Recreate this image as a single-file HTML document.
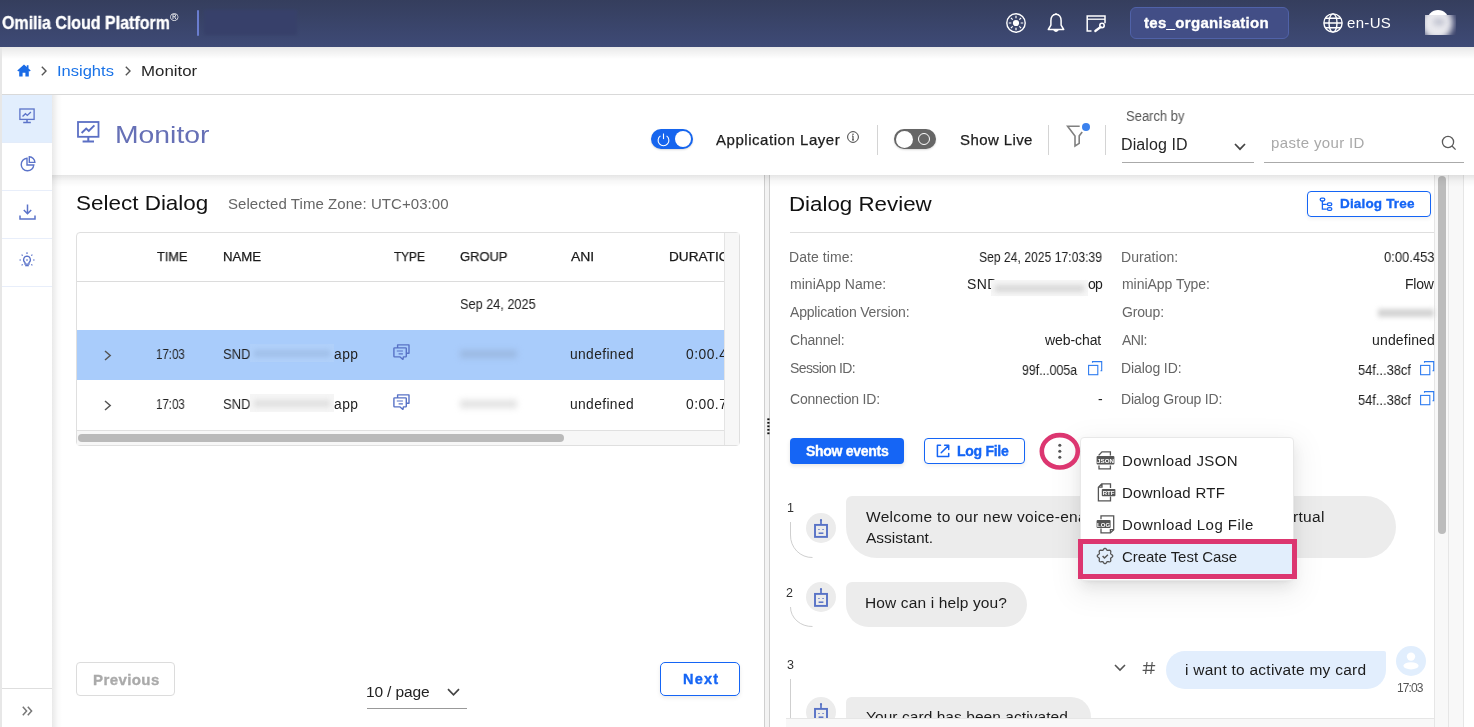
<!DOCTYPE html>
<html><head><meta charset="utf-8">
<style>
*{box-sizing:border-box;margin:0;padding:0}
html,body{width:1474px;height:727px;overflow:hidden;background:#fff}
body{position:relative;font-family:"Liberation Sans",sans-serif}
.a{position:absolute}
.t{position:absolute;white-space:nowrap;z-index:4;will-change:transform}
svg{position:absolute;overflow:visible}
.ov{z-index:5}
</style></head><body>
<!-- HEADER -->
<div class="a" style="left:0;top:0;width:1474px;height:47px;background:linear-gradient(#353e5d,#3e4a76);z-index:3"></div>
<div class="a" style="left:0;top:47px;width:1474px;height:12px;background:linear-gradient(rgba(0,0,0,.09),rgba(0,0,0,0));z-index:1"></div>
<div class="a" style="left:197px;top:10px;width:1.5px;height:26px;background:#6a7dcf;border-radius:1px;z-index:4"></div>
<div class="a" style="left:204px;top:10px;width:93px;height:25px;background:#37406a;filter:blur(1.5px);z-index:4"></div>
<div class="a" style="left:1130px;top:7px;width:159px;height:32px;background:#424e86;border:1px solid #5062a8;border-radius:6px;z-index:4"></div>
<div class="a" style="left:1427px;top:10.3px;width:22px;height:22px;background:#fff;border-radius:50%;z-index:4"></div>
<div class="a" style="left:1425px;top:15px;width:31px;height:20px;overflow:hidden;background:#39426b;z-index:4">
 <div class="a" style="left:-4px;top:-9px;width:32px;height:34px;background:#e9e9ee;border-radius:50%;filter:blur(3px)"></div>
 <div class="a" style="left:8px;top:3px;width:12px;height:8px;background:#c5c7d3;border-radius:50%;filter:blur(2.5px)"></div>
</div>
<!-- header icons -->
<svg style="left:1006px;top:13px;z-index:4" width="20" height="20" viewBox="0 0 20 20" fill="none" stroke="#fff">
 <circle cx="10" cy="10" r="9.2" stroke-width="1.4"/>
 <circle cx="10" cy="10" r="3.1" fill="#fff" stroke="none"/>
 <g stroke-width="1.3" stroke-linecap="butt">
 <path d="M14.70 10.00L17.20 10.00M13.32 13.32L15.09 15.09M10.00 14.70L10.00 17.20M6.68 13.32L4.91 15.09M5.30 10.00L2.80 10.00M6.68 6.68L4.91 4.91M10.00 5.30L10.00 2.80M13.32 6.68L15.09 4.91" stroke-width="1.2"/></g>
</svg>
<svg style="left:1047px;top:13px;z-index:4" width="18" height="20" viewBox="0 0 18 20" fill="none" stroke="#fff" stroke-width="1.5" stroke-linejoin="round">
 <path d="M9 1.3C5.6 1.3 3.9 4.2 3.9 7.5v4.6L1.3 16.5h15.4l-2.6-4.4V7.5C14.1 4.2 12.4 1.3 9 1.3z"/>
 <path d="M9 .2v1.2" stroke-width="1.6"/>
 <path d="M6.9 16.8Q9 19.6 11.1 16.8" fill="#fff"/>
</svg>
<svg style="left:1086px;top:15px;z-index:4" width="20" height="17" viewBox="0 0 20 17" fill="none" stroke="#fff" stroke-width="1.5">
 <path d="M5.5 16H1.2V1H19V8.2"/>
 <path d="M1.2 4.2H19" stroke-width="1.3"/>
 <circle cx="16" cy="10.5" r="2.2" stroke-width="1.6"/>
 <path d="M14.6 12L9.3 16" stroke-width="2.2" stroke-linecap="round"/>
</svg>
<svg style="left:1323px;top:13px;z-index:4" width="20" height="20" viewBox="0 0 20 20" fill="none" stroke="#fff" stroke-width="1.4">
 <circle cx="10" cy="10" r="9.1"/>
 <ellipse cx="10" cy="10" rx="4" ry="9.1"/>
 <path d="M1 10h18M2.3 5.3h15.4M2.3 14.7h15.4"/>
</svg>
<!-- BREADCRUMB -->
<div class="a" style="left:0;top:47px;width:2px;height:680px;background:#e7e7e7;z-index:6"></div>
<div class="a" style="left:2px;top:94px;width:1472px;height:1px;background:#d9d9d9"></div>
<svg style="left:17px;top:64px" width="14" height="13" viewBox="0 0 14 13">
 <path d="M7 .6L.3 6.4l1 1.1L2.2 6.8V12.6H5.6V8.8H8.4V12.6H11.8V6.8l.9.7 1-1.1L11.5 4.4V1.2H9.8V2.9z" fill="#1a6be6"/>
</svg>
<svg style="left:41px;top:66px" width="6" height="10" viewBox="0 0 6 10" fill="none" stroke="#555" stroke-width="1.4"><path d="M.8 .8L5 5 .8 9.2"/></svg>
<svg style="left:125px;top:66px" width="6" height="10" viewBox="0 0 6 10" fill="none" stroke="#555" stroke-width="1.4"><path d="M.8 .8L5 5 .8 9.2"/></svg>
<!-- SIDEBAR -->
<div class="a" style="left:2px;top:95px;width:50px;height:48px;background:#e2eefd"></div>
<div class="a" style="left:2px;top:142px;width:50px;height:1px;background:#e3ecfa"></div>
<div class="a" style="left:2px;top:190px;width:50px;height:1px;background:#e8eefa"></div>
<div class="a" style="left:2px;top:238px;width:50px;height:1px;background:#e8eefa"></div>
<div class="a" style="left:2px;top:286px;width:50px;height:1px;background:#e8eefa"></div>
<div class="a" style="left:2px;top:688px;width:50px;height:1px;background:#dedede"></div>
<div class="a" style="left:52px;top:95px;width:10px;height:632px;background:linear-gradient(90deg,rgba(0,0,0,.085),rgba(0,0,0,.02) 60%,rgba(0,0,0,0));z-index:3"></div>
<svg style="left:19px;top:108px" width="16" height="16" viewBox="0 0 16 16" fill="none" stroke="#5b73c9" stroke-width="1.3">
 <rect x=".9" y="1" width="14.2" height="10.4"/>
 <path d="M8 11.4v2.6M4.2 14.6h7.6" stroke-width="1.5"/>
 <path d="M3.5 8.6l3-2.8 1.8 1.6 3.6-3.4" stroke-width="1.4"/>
</svg>
<svg style="left:19.5px;top:155.5px" width="16" height="16" viewBox="0 0 16 16" fill="none" stroke="#5b73c9" stroke-width="1.4">
 <path d="M7 2.2A6.3 6.3 0 1 0 13.8 9H7z"/>
 <path d="M9.3 .8v5.6h5.6A5.8 5.8 0 0 0 9.3 .8z"/>
</svg>
<svg style="left:18.5px;top:204px" width="17" height="16" viewBox="0 0 17 16" fill="none" stroke="#5b73c9" stroke-width="1.5">
 <path d="M8.5 .5v9M4.8 6l3.7 3.7L12.2 6"/>
 <path d="M1 11.5v3.4h15v-3.4"/>
</svg>
<svg style="left:19px;top:252px" width="16" height="16" viewBox="0 0 16 16" fill="none" stroke="#5b73c9" stroke-width="1.3">
 <path d="M8 4.2a3.5 3.5 0 0 0-2 6.3v1.6h4v-1.6a3.5 3.5 0 0 0-2-6.3z"/>
 <path d="M6.2 13.6h3.6" stroke-width="1.4"/>
 <path d="M6.8 7.6h2.4L8 9.2z" fill="#5b73c9" stroke="none"/>
 <path d="M8 .3v1.6M.4 8h1.6M14 8h1.6M2.6 2.6l1.1 1.1M13.4 2.6l-1.1 1.1M2.6 13.4l1.1-1.1M13.4 13.4l-1.1-1.1" stroke-width="1.2"/>
</svg>
<svg style="left:21.5px;top:706px" width="11" height="10" viewBox="0 0 11 10" fill="none" stroke="#777" stroke-width="1.5"><path d="M.8 .8L4.6 5 .8 9.2M5.8 .8L9.6 5 5.8 9.2"/></svg>
<!-- MONITOR HEADER PANEL -->
<div class="a" style="left:52px;top:175px;width:1422px;height:12px;background:linear-gradient(rgba(0,0,0,.1),rgba(0,0,0,.03) 50%,rgba(0,0,0,0));z-index:1"></div>
<svg style="left:76.5px;top:120.5px" width="23" height="22" viewBox="0 0 23 22" fill="none" stroke="#5b6fc4" stroke-width="1.8">
 <rect x="1" y="1" width="20.5" height="14.8"/>
 <path d="M11.3 15.8v3.6M5.6 20.6h11.4" stroke-width="2"/>
 <path d="M4.6 12l4.6-4.4 2.6 2.4 5.6-5.6" stroke-width="1.9"/>
</svg>
<!-- toggle 1 -->
<div class="a" style="left:651px;top:129px;width:42px;height:20px;border-radius:10px;background:#1665ee;box-shadow:0 1px 2px rgba(0,0,0,.15)"></div>
<div class="a" style="left:675px;top:131px;width:16px;height:16px;border-radius:50%;background:#fff"></div>
<svg style="left:656.5px;top:133px" width="13" height="13" viewBox="0 0 13 13" fill="none" stroke="#fff" stroke-width="1.1"><path d="M3.4 2.9A5.4 5.4 0 1 0 9.6 2.9"/><path d="M6.5 .5v5.6"/></svg>
<svg style="left:847px;top:131px" width="12" height="12" viewBox="0 0 12 12" fill="none" stroke="#444" stroke-width="1"><circle cx="6" cy="6" r="5.4"/><path d="M6 5v4M5 9h2M5.1 5h1" stroke-width="1.1"/><circle cx="6" cy="3.2" r=".75" fill="#444" stroke="none"/></svg>
<div class="a" style="left:877px;top:125px;width:1px;height:30px;background:#d4d4d4"></div>
<!-- toggle 2 -->
<div class="a" style="left:894px;top:129px;width:42px;height:20px;border-radius:10px;background:#666;box-shadow:0 1px 2px rgba(0,0,0,.15)"></div>
<div class="a" style="left:895.5px;top:130.5px;width:17px;height:17px;border-radius:50%;background:#fff"></div>
<div class="a" style="left:918px;top:133px;width:12px;height:12px;border-radius:50%;border:1.2px solid #fff"></div>
<div class="a" style="left:1048px;top:125px;width:1px;height:30px;background:#d4d4d4"></div>
<svg style="left:1066px;top:124px" width="18" height="24" viewBox="0 0 18 24" fill="none" stroke="#808080" stroke-width="1.6" stroke-linejoin="miter">
 <path d="M16.2 8.1L13.2 11.9V19.3L9 22V12L1.6 2.2H13.7"/>
</svg>
<div class="a" style="left:1082px;top:123px;width:8px;height:8px;border-radius:50%;background:#3b82ee"></div>
<div class="a" style="left:1105px;top:125px;width:1px;height:30px;background:#d4d4d4"></div>
<svg style="left:1234px;top:143px" width="12" height="8" viewBox="0 0 12 8" fill="none" stroke="#444" stroke-width="1.7"><path d="M1 1l5 5.2L11 1"/></svg>
<div class="a" style="left:1122px;top:162px;width:132px;height:1px;background:#aaa"></div>
<div class="a" style="left:1264px;top:162px;width:200px;height:1px;background:#aaa"></div>
<svg style="left:1441px;top:135px" width="16" height="16" viewBox="0 0 16 16" fill="none" stroke="#5a5a5a" stroke-width="1.3"><circle cx="7" cy="7" r="5.6"/><path d="M11 11l3.6 3.6"/></svg>
<!-- RESIZER -->
<div class="a" style="left:764px;top:175px;width:6px;height:552px;background:#f3f3f3;border-left:1px solid #cfcfcf;border-right:1px solid #cfcfcf"></div>
<svg style="left:766.5px;top:418px;z-index:3" width="3" height="17" viewBox="0 0 3 17" fill="#111"><rect x=".3" y=".4" width="2.2" height="1.8"/><rect x=".3" y="3.9" width="2.2" height="1.8"/><rect x=".3" y="7.4" width="2.2" height="1.8"/><rect x=".3" y="10.9" width="2.2" height="1.8"/><rect x=".3" y="14.4" width="2.2" height="1.8"/></svg>
<!-- TABLE -->
<div class="a" style="left:76px;top:232px;width:664px;height:214px;border:1px solid #dfdfdf;border-radius:4px"></div>
<div class="a" style="left:77px;top:281px;width:647px;height:1px;background:#dcdcdc"></div>
<div class="a" style="left:77px;top:330px;width:647px;height:50px;background:#a9ccfb"></div>
<div class="a" style="left:77px;top:430px;width:647px;height:1px;background:#e0e0e0"></div>
<div class="a ov" style="left:724px;top:233px;width:15px;height:212px;background:#f7f7f7;border-left:1px solid #e4e4e4"></div>
<div class="a ov" style="left:77px;top:431px;width:647px;height:14px;background:#f7f7f7"></div>
<div class="a ov" style="left:78px;top:434px;width:486px;height:8px;background:#bababa;border-radius:4px"></div>
<!-- row chevrons -->
<svg style="left:104px;top:349.5px" width="8" height="11" viewBox="0 0 8 11" fill="none" stroke="#555" stroke-width="1.5"><path d="M1 1l5.2 4.5L1 10"/></svg>
<svg style="left:104px;top:399.5px" width="8" height="11" viewBox="0 0 8 11" fill="none" stroke="#555" stroke-width="1.5"><path d="M1 1l5.2 4.5L1 10"/></svg>
<!-- type icons -->
<svg style="left:392.5px;top:343.5px" width="17" height="17" viewBox="0 0 17 17" fill="none" stroke="#5872c6" stroke-width="1.4" stroke-linejoin="round"><path d="M4.6 3.9V.9h11.4v8.3h-2.7"/><path d="M1.6 3.9h11q.7 0 .7.7v7.6q0 .7-.7.7h-2.2l-.5 2.5-2.8-2.5H1.6q-.7 0-.7-.7v-7.6q0-.7.7-.7z"/><path d="M3.8 7h6.1M5.6 9.8h4.3" stroke-width="1.2"/></svg>
<svg style="left:392.5px;top:393.5px" width="17" height="17" viewBox="0 0 17 17" fill="none" stroke="#5872c6" stroke-width="1.4" stroke-linejoin="round"><path d="M4.6 3.9V.9h11.4v8.3h-2.7"/><path d="M1.6 3.9h11q.7 0 .7.7v7.6q0 .7-.7.7h-2.2l-.5 2.5-2.8-2.5H1.6q-.7 0-.7-.7v-7.6q0-.7.7-.7z"/><path d="M3.8 7h6.1M5.6 9.8h4.3" stroke-width="1.2"/></svg>
<!-- blurred names -->
<div class="a" style="left:250px;top:344px;width:84px;height:18px;background:#b0d0fa;z-index:5"></div>
<div class="a" style="left:254px;top:350px;width:76px;height:7px;background:#94b3dc;filter:blur(2.5px);opacity:.55;z-index:5"></div>
<div class="a" style="left:250px;top:394px;width:84px;height:18px;background:#f5f5f5;z-index:5"></div>
<div class="a" style="left:254px;top:400px;width:76px;height:7px;background:#d0d0d0;filter:blur(2.5px);opacity:.55;z-index:5"></div>
<div class="a" style="left:460px;top:350px;width:57px;height:8px;background:#8ea6c8;filter:blur(3px);opacity:.5;z-index:5"></div>
<div class="a" style="left:460px;top:400px;width:57px;height:8px;background:#c4c4c4;filter:blur(3px);opacity:.5;z-index:5"></div>
<!-- PAGINATION -->
<div class="a" style="left:76px;top:662px;width:99px;height:34px;border:1px solid #dcdcdc;border-radius:4px"></div>
<div class="a" style="left:660px;top:662px;width:80px;height:34px;border:1.5px solid #1565f5;border-radius:5px;box-shadow:0 2px 4px rgba(0,0,0,.08)"></div>
<div class="a" style="left:367px;top:708px;width:100px;height:1px;background:#999"></div>
<svg style="left:446.5px;top:688px" width="13" height="9" viewBox="0 0 13 9" fill="none" stroke="#444" stroke-width="1.7"><path d="M1 1.2l5.5 5.6L12 1.2"/></svg>

<!-- right scroll strips -->
<div class="a" style="left:1434px;top:175px;width:15px;height:552px;background:#f8f8f8;border-left:1px solid #e6e6e6;border-right:1px solid #e6e6e6"></div>
<div class="a" style="left:1438px;top:176px;width:8px;height:358px;background:#bcbcbc;border-radius:4px"></div>
<div class="a" style="left:1449px;top:175px;width:15px;height:552px;background:#f8f8f8;border-right:1px solid #e6e6e6"></div>
<div class="a ov" style="left:786px;top:718px;width:648px;height:9px;background:#f8f8f8;border-top:1px solid #e6e6e6"></div>
<div class="a" style="left:790px;top:232px;width:644px;height:1px;background:#dedede"></div>
<!-- dialog tree btn -->
<div class="a" style="left:1307px;top:191px;width:124px;height:26px;border:1.5px solid #1565f5;border-radius:4px;box-shadow:0 2px 4px rgba(0,0,0,.06)"></div>
<svg style="left:1319px;top:197px" width="14" height="14" viewBox="0 0 14 14" fill="none" stroke="#1565f5" stroke-width="1.3">
 <rect x="1.2" y="1.2" width="4.6" height="2.8" rx="1.4"/>
 <path d="M3.4 4v8.2h4.4M3.4 7.4h4.4"/>
 <rect x="8.4" y="5.8" width="4.4" height="2.8" rx="1.4"/>
 <rect x="8.4" y="10.6" width="4.4" height="2.8" rx="1.4"/>
</svg>
<!-- copy icons -->
<svg style="left:1088px;top:361px" width="15" height="15" viewBox="0 0 15 15" fill="none" stroke="#2e7cf0" stroke-width="1.1"><rect x=".6" y="4.4" width="9.2" height="9.3"/><path d="M4.5 1.8V.6h9.2v9.2h-1.2"/></svg>
<svg style="left:1420px;top:361px" width="15" height="15" viewBox="0 0 15 15" fill="none" stroke="#2e7cf0" stroke-width="1.1"><rect x=".6" y="4.4" width="9.2" height="9.3"/><path d="M4.5 1.8V.6h9.2v9.2h-1.2"/></svg>
<svg style="left:1420px;top:391px" width="15" height="15" viewBox="0 0 15 15" fill="none" stroke="#2e7cf0" stroke-width="1.1"><rect x=".6" y="4.4" width="9.2" height="9.3"/><path d="M4.5 1.8V.6h9.2v9.2h-1.2"/></svg>
<!-- blurred values -->
<div class="a" style="left:991px;top:280px;width:97px;height:16px;background:#f6f6f6;z-index:5"></div>
<div class="a" style="left:995px;top:285px;width:89px;height:7px;background:#d8d8d8;filter:blur(2.5px);z-index:5"></div>
<div class="a" style="left:1378px;top:309px;width:56px;height:8px;background:#d2d2d2;filter:blur(2.5px)"></div>
<!-- buttons -->
<div class="a" style="left:790px;top:438px;width:114px;height:26px;background:#1565f5;border-radius:4px;box-shadow:0 2px 4px rgba(0,0,0,.1)"></div>
<div class="a" style="left:924px;top:438px;width:101px;height:26px;border:1.5px solid #1565f5;border-radius:4px;box-shadow:0 2px 4px rgba(0,0,0,.06)"></div>
<svg style="left:936px;top:444px" width="14" height="14" viewBox="0 0 14 14" fill="none" stroke="#1565f5" stroke-width="1.5" stroke-linecap="round" stroke-linejoin="round"><path d="M4.5 1.2H1.4v11.4h11.3V9.4"/><path d="M5.2 8.8L12.4 1.6M8.6 1.3h4.1v4.1"/></svg>
<!-- kebab with pink circle -->
<svg style="left:1038px;top:430px;z-index:6" width="44" height="44" viewBox="0 0 44 44"><ellipse cx="21.8" cy="21.3" rx="18" ry="16.2" fill="none" stroke="#dc3670" stroke-width="4.6"/><circle cx="21.8" cy="15.2" r="1.55" fill="#555"/><circle cx="21.8" cy="21.2" r="1.55" fill="#555"/><circle cx="21.8" cy="27.2" r="1.55" fill="#555"/></svg>
<!-- CHAT -->
<div class="a" style="left:1080px;top:496px;width:0;height:0"></div>
<div class="a" style="left:846px;top:496px;width:550px;height:62px;background:#ececec;border-radius:6px 31px 31px 31px"></div>
<div class="a" style="left:846px;top:582px;width:181px;height:45px;background:#ececec;border-radius:6px 22.5px 22.5px 22.5px"></div>
<div class="a" style="left:846px;top:697px;width:245px;height:40px;background:#ececec;border-radius:6px 22px 22px 22px"></div>
<div class="a" style="left:1166px;top:651px;width:220px;height:38px;background:#e2eefd;border-radius:19px 2px 19px 19px"></div>
<!-- bot avatars -->
<svg style="left:806px;top:513px" width="30" height="30" viewBox="0 0 30 30"><circle cx="15" cy="15" r="15" fill="#ececec"/><g fill="none" stroke="#5872c6"><rect x="9" y="11.9" width="12" height="12" stroke-width="1.9"/><path d="M15 6.8v5" stroke-width="1.7"/><path d="M12.3 16.5h1.3M16.4 16.5h1.3" stroke-width="1.2"/><path d="M12.6 20.2h4.8" stroke-width="1.5"/></g><circle cx="15" cy="7.2" r="1.1" fill="#5872c6"/></svg>
<svg style="left:806px;top:582px" width="30" height="30" viewBox="0 0 30 30"><circle cx="15" cy="15" r="15" fill="#ececec"/><g fill="none" stroke="#5872c6"><rect x="9" y="11.9" width="12" height="12" stroke-width="1.9"/><path d="M15 6.8v5" stroke-width="1.7"/><path d="M12.3 16.5h1.3M16.4 16.5h1.3" stroke-width="1.2"/><path d="M12.6 20.2h4.8" stroke-width="1.5"/></g><circle cx="15" cy="7.2" r="1.1" fill="#5872c6"/></svg>
<svg style="left:806px;top:697px" width="30" height="30" viewBox="0 0 30 30"><circle cx="15" cy="15" r="15" fill="#ececec"/><g fill="none" stroke="#5872c6"><rect x="9" y="11.9" width="12" height="12" stroke-width="1.9"/><path d="M15 6.8v5" stroke-width="1.7"/><path d="M12.3 16.5h1.3M16.4 16.5h1.3" stroke-width="1.2"/><path d="M12.6 20.2h4.8" stroke-width="1.5"/></g><circle cx="15" cy="7.2" r="1.1" fill="#5872c6"/></svg>
<!-- thread curves -->
<svg style="left:789px;top:522px" width="26" height="37" viewBox="0 0 26 37" fill="none" stroke="#cfcfcf" stroke-width="1"><path d="M1.5 0v13A21.5 22 0 0 0 23.5 35.5"/></svg>
<svg style="left:789px;top:607px" width="26" height="22" viewBox="0 0 26 22" fill="none" stroke="#cfcfcf" stroke-width="1"><path d="M1.5 0A21.5 19.5 0 0 0 23.5 19.5"/></svg>
<div class="a" style="left:790px;top:679px;width:1px;height:40px;background:#cfcfcf"></div>
<!-- user avatar -->
<svg style="left:1396px;top:646px" width="30" height="30" viewBox="0 0 30 30"><circle cx="15" cy="15" r="15" fill="#e1eefd"/><circle cx="15" cy="10.6" r="4.2" fill="#fff"/><ellipse cx="15" cy="19.8" rx="7.6" ry="3.6" fill="#fff"/></svg>
<svg style="left:1114px;top:664px" width="12" height="8" viewBox="0 0 12 8" fill="none" stroke="#555" stroke-width="1.6"><path d="M1 1l5 5 5-5"/></svg>
<svg style="left:1142px;top:661px" width="14" height="14" viewBox="0 0 14 14" fill="none" stroke="#555" stroke-width="1.2"><path d="M5 1L3.6 13M10.2 1L8.8 13M1.2 4.6h12M.6 9.4h12"/></svg>
<!-- MENU -->
<div class="a ov" style="left:1079.5px;top:436.5px;width:214px;height:144.5px;background:#fff;border:1px solid #e8e8e8;border-radius:4px;box-shadow:0 3px 6px -4px rgba(0,0,0,.12),0 6px 16px 0 rgba(0,0,0,.08),0 9px 28px 8px rgba(0,0,0,.05)"></div>
<div class="a ov" style="left:1083px;top:544px;width:210px;height:30px;background:#e2eefc"></div>
<div class="a" style="left:1078px;top:539px;width:219px;height:40px;border:5px solid #dc3670;z-index:6"></div>
<svg class="ov" style="left:1095.5px;top:450.5px;z-index:6" width="19" height="19" viewBox="0 0 19 19" fill="none" stroke="#555" stroke-width="1.3"><path d="M3 4.5V4L6 .9h8.4v3.6M3 14.5v3.3h11.4v-3.3"/><rect x=".6" y="5" width="17.8" height="8.4" fill="#555" stroke="none" rx="1"/><text x="9.5" y="11.6" font-size="6.2" font-weight="bold" fill="#fff" stroke="none" text-anchor="middle" font-family="Liberation Sans">JSON</text></svg>
<svg class="ov" style="left:1096.5px;top:482.5px;z-index:6" width="19" height="19" viewBox="0 0 19 19" fill="none" stroke="#555" stroke-width="1.3"><path d="M5 .9h8.5v4M13.5 13.6v4.3H1.4V4.2L4.7 .9h.3v3.3H1.4M1.4 4.2V17.9"/><rect x="4.8" y="6" width="13.6" height="7.2" fill="#555" stroke="none" rx=".8"/><text x="11.6" y="11.8" font-size="6" font-weight="bold" fill="#fff" stroke="none" text-anchor="middle" font-family="Liberation Sans">RTF</text></svg>
<svg class="ov" style="left:1095.5px;top:514.5px;z-index:6" width="19" height="19" viewBox="0 0 19 19" fill="none" stroke="#555" stroke-width="1.3"><path d="M5 4.3V.9h12.7v13.8l-3.3 3.2H5v-4.5"/><path d="M17.7 14.7h-3.3v3.2" /><rect x=".6" y="5" width="14" height="8" fill="#555" stroke="none" rx="1"/><text x="7.6" y="11.6" font-size="6" font-weight="bold" fill="#fff" stroke="none" text-anchor="middle" font-family="Liberation Sans">LOG</text></svg>
<svg class="ov" style="left:1096px;top:547px;z-index:6" width="18" height="18" viewBox="0 0 18 18" fill="none" stroke="#555" stroke-width="1.3" stroke-linejoin="round"><path d="M9.00 1.30 L9.50 1.42 L9.95 1.76 L10.35 2.23 L10.68 2.72 L11.00 3.12 L11.33 3.36 L11.75 3.43 L12.25 3.37 L12.83 3.26 L13.44 3.21 L14.01 3.29 L14.44 3.56 L14.71 3.99 L14.79 4.56 L14.74 5.17 L14.63 5.75 L14.57 6.25 L14.64 6.67 L14.88 7.00 L15.28 7.32 L15.77 7.65 L16.24 8.05 L16.58 8.50 L16.70 9.00 L16.58 9.50 L16.24 9.95 L15.77 10.35 L15.28 10.68 L14.88 11.00 L14.64 11.33 L14.57 11.75 L14.63 12.25 L14.74 12.83 L14.79 13.44 L14.71 14.01 L14.44 14.44 L14.01 14.71 L13.44 14.79 L12.83 14.74 L12.25 14.63 L11.75 14.57 L11.33 14.64 L11.00 14.88 L10.68 15.28 L10.35 15.77 L9.95 16.24 L9.50 16.58 L9.00 16.70 L8.50 16.58 L8.05 16.24 L7.65 15.77 L7.32 15.28 L7.00 14.88 L6.67 14.64 L6.25 14.57 L5.75 14.63 L5.17 14.74 L4.56 14.79 L3.99 14.71 L3.56 14.44 L3.29 14.01 L3.21 13.44 L3.26 12.83 L3.37 12.25 L3.43 11.75 L3.36 11.33 L3.12 11.00 L2.72 10.68 L2.23 10.35 L1.76 9.95 L1.42 9.50 L1.30 9.00 L1.42 8.50 L1.76 8.05 L2.23 7.65 L2.72 7.32 L3.12 7.00 L3.36 6.67 L3.43 6.25 L3.37 5.75 L3.26 5.17 L3.21 4.56 L3.29 3.99 L3.56 3.56 L3.99 3.29 L4.56 3.21 L5.17 3.26 L5.75 3.37 L6.25 3.43 L6.67 3.36 L7.00 3.12 L7.32 2.72 L7.65 2.23 L8.05 1.76 L8.50 1.42z"/><path d="M6.6 9.1l1.9 2 3.4-3.3" stroke-width="1.4"/></svg>

<span class="t" style="left:2.00px;top:15.43px;font-size:17.8px;line-height:17.8px;font-weight:bold;color:#fff;letter-spacing:0.000px;transform:scaleX(0.8987);transform-origin:0 0;-webkit-text-stroke:0.35px #fff;">Omilia Cloud Platform</span>
<span class="t" style="left:169.85px;top:11.56px;font-size:11.5px;line-height:11.5px;font-weight:normal;color:#fff;letter-spacing:0.000px;">®</span>
<span class="t" style="left:1143.50px;top:15.20px;font-size:15px;line-height:15px;font-weight:bold;color:#fff;letter-spacing:0.313px;-webkit-text-stroke:0.35px #fff;">tes_organisation</span>
<span class="t" style="left:1346.53px;top:15.20px;font-size:15px;line-height:15px;font-weight:normal;color:#fff;letter-spacing:0.320px;">en-US</span>
<span class="t" style="left:57.11px;top:63.45px;font-size:15.3px;line-height:15.3px;font-weight:normal;color:#1a73e8;letter-spacing:0.000px;transform:scaleX(1.0792);transform-origin:0 0;">Insights</span>
<span class="t" style="left:141.18px;top:63.45px;font-size:15.3px;line-height:15.3px;font-weight:normal;color:#262626;letter-spacing:0.000px;transform:scaleX(1.1016);transform-origin:0 0;">Monitor</span>
<span class="t" style="left:115.39px;top:123.06px;font-size:24.5px;line-height:24.5px;font-weight:normal;color:#6670b6;letter-spacing:0.000px;transform:scaleX(1.1562);transform-origin:0 0;">Monitor</span>
<span class="t" style="left:716.40px;top:131.50px;font-size:15px;line-height:15px;font-weight:normal;color:#1c1c1c;letter-spacing:0.538px;-webkit-text-stroke:0.25px #1c1c1c;">Application Layer</span>
<span class="t" style="left:959.93px;top:131.50px;font-size:15px;line-height:15px;font-weight:normal;color:#1c1c1c;letter-spacing:0.396px;-webkit-text-stroke:0.25px #1c1c1c;">Show Live</span>
<span class="t" style="left:1125.59px;top:109.82px;font-size:13.8px;line-height:13.8px;font-weight:normal;color:#555;letter-spacing:0.000px;transform:scaleX(0.9400);transform-origin:0 0;">Search by</span>
<span class="t" style="left:1121.05px;top:137.05px;font-size:16px;line-height:16px;font-weight:normal;color:#262626;letter-spacing:0.088px;">Dialog ID</span>
<span class="t" style="left:1271.06px;top:135.30px;font-size:15px;line-height:15px;font-weight:normal;color:#a9a9a9;letter-spacing:0.354px;">paste your ID</span>
<span class="t" style="left:75.80px;top:194.04px;font-size:19.8px;line-height:19.8px;font-weight:normal;color:#111;letter-spacing:0.000px;transform:scaleX(1.1354);transform-origin:0 0;">Select Dialog</span>
<span class="t" style="left:227.53px;top:196.30px;font-size:15px;line-height:15px;font-weight:normal;color:#666;letter-spacing:0.061px;">Selected Time Zone: UTC+03:00</span>
<span class="t" style="left:156.80px;top:250.22px;font-size:13.2px;line-height:13.2px;font-weight:normal;color:#1a1a1a;letter-spacing:0.000px;transform:scaleX(0.9652);transform-origin:0 0;-webkit-text-stroke:0.25px #1a1a1a;">TIME</span>
<span class="t" style="left:222.57px;top:250.22px;font-size:13.2px;line-height:13.2px;font-weight:normal;color:#1a1a1a;letter-spacing:0.000px;transform:scaleX(0.9959);transform-origin:0 0;-webkit-text-stroke:0.25px #1a1a1a;">NAME</span>
<span class="t" style="left:393.62px;top:250.22px;font-size:13.2px;line-height:13.2px;font-weight:normal;color:#1a1a1a;letter-spacing:0.000px;transform:scaleX(0.8957);transform-origin:0 0;-webkit-text-stroke:0.25px #1a1a1a;">TYPE</span>
<span class="t" style="left:459.99px;top:250.22px;font-size:13.2px;line-height:13.2px;font-weight:normal;color:#1a1a1a;letter-spacing:0.000px;transform:scaleX(0.9824);transform-origin:0 0;-webkit-text-stroke:0.25px #1a1a1a;">GROUP</span>
<span class="t" style="left:571.00px;top:250.22px;font-size:13.2px;line-height:13.2px;font-weight:normal;color:#1a1a1a;letter-spacing:0.000px;transform:scaleX(1.0571);transform-origin:0 0;-webkit-text-stroke:0.25px #1a1a1a;">ANI</span>
<span class="t" style="left:668.94px;top:250.22px;font-size:13.2px;line-height:13.2px;font-weight:normal;color:#1a1a1a;letter-spacing:0.000px;transform:scaleX(1.0327);transform-origin:0 0;-webkit-text-stroke:0.25px #1a1a1a;width:64px;overflow:hidden;">DURATION</span>
<span class="t" style="left:460.20px;top:298.32px;font-size:13.8px;line-height:13.8px;font-weight:normal;color:#222;letter-spacing:0.000px;transform:scaleX(0.9209);transform-origin:0 0;">Sep 24, 2025</span>
<span class="t" style="left:156.28px;top:347.92px;font-size:13.8px;line-height:13.8px;font-weight:normal;color:#222;letter-spacing:0.000px;transform:scaleX(0.8335);transform-origin:0 0;">17:03</span>
<span class="t" style="left:223.10px;top:348.32px;font-size:13.8px;line-height:13.8px;font-weight:normal;color:#222;letter-spacing:0.000px;transform:scaleX(0.9388);transform-origin:0 0;">SND</span>
<span class="t" style="left:333.57px;top:348.32px;font-size:13.8px;line-height:13.8px;font-weight:normal;color:#222;letter-spacing:0.483px;">app</span>
<span class="t" style="left:570.14px;top:348.32px;font-size:13.8px;line-height:13.8px;font-weight:normal;color:#222;letter-spacing:0.377px;">undefined</span>
<span class="t" style="left:156.28px;top:397.92px;font-size:13.8px;line-height:13.8px;font-weight:normal;color:#222;letter-spacing:0.000px;transform:scaleX(0.8335);transform-origin:0 0;">17:03</span>
<span class="t" style="left:223.10px;top:398.32px;font-size:13.8px;line-height:13.8px;font-weight:normal;color:#222;letter-spacing:0.000px;transform:scaleX(0.9388);transform-origin:0 0;">SND</span>
<span class="t" style="left:333.57px;top:398.32px;font-size:13.8px;line-height:13.8px;font-weight:normal;color:#222;letter-spacing:0.483px;">app</span>
<span class="t" style="left:570.14px;top:398.32px;font-size:13.8px;line-height:13.8px;font-weight:normal;color:#222;letter-spacing:0.377px;">undefined</span>
<span class="t" style="left:686.07px;top:348.32px;font-size:13.8px;line-height:13.8px;font-weight:normal;color:#222;letter-spacing:0.500px;width:38px;overflow:hidden;">0:00.453</span>
<span class="t" style="left:686.07px;top:398.32px;font-size:13.8px;line-height:13.8px;font-weight:normal;color:#222;letter-spacing:0.500px;width:38px;overflow:hidden;">0:00.782</span>
<span class="t" style="left:92.66px;top:672.10px;font-size:15px;line-height:15px;font-weight:bold;color:#aaa;letter-spacing:0.412px;-webkit-text-stroke:0.35px #aaa;">Previous</span>
<span class="t" style="left:366.13px;top:684.48px;font-size:15.5px;line-height:15.5px;font-weight:normal;color:#222;letter-spacing:-0.143px;">10 / page</span>
<span class="t" style="left:682.69px;top:671.62px;font-size:14.5px;line-height:14.5px;font-weight:bold;color:#1565f5;letter-spacing:1.183px;-webkit-text-stroke:0.35px #1565f5;">Next</span>
<span class="t" style="left:789.06px;top:194.24px;font-size:20.5px;line-height:20.5px;font-weight:normal;color:#111;letter-spacing:0.000px;transform:scaleX(1.0889);transform-origin:0 0;">Dialog Review</span>
<span class="t" style="left:1339.96px;top:196.57px;font-size:13.5px;line-height:13.5px;font-weight:bold;color:#1565f5;letter-spacing:0.161px;-webkit-text-stroke:0.35px #1565f5;">Dialog Tree</span>
<span class="t" style="left:789.31px;top:249.65px;font-size:14px;line-height:14px;font-weight:normal;color:#666;letter-spacing:0.073px;">Date time:</span>
<span class="t" style="left:789.52px;top:277.45px;font-size:14px;line-height:14px;font-weight:normal;color:#666;letter-spacing:0.045px;">miniApp Name:</span>
<span class="t" style="left:790.40px;top:305.35px;font-size:14px;line-height:14px;font-weight:normal;color:#666;letter-spacing:-0.179px;">Application Version:</span>
<span class="t" style="left:789.74px;top:333.35px;font-size:14px;line-height:14px;font-weight:normal;color:#666;letter-spacing:-0.203px;">Channel:</span>
<span class="t" style="left:789.96px;top:361.35px;font-size:14px;line-height:14px;font-weight:normal;color:#666;letter-spacing:-0.598px;">Session ID:</span>
<span class="t" style="left:789.74px;top:391.55px;font-size:14px;line-height:14px;font-weight:normal;color:#666;letter-spacing:-0.199px;">Connection ID:</span>
<span class="t" style="left:1121.31px;top:249.65px;font-size:14px;line-height:14px;font-weight:normal;color:#666;letter-spacing:0.056px;">Duration:</span>
<span class="t" style="left:1121.53px;top:277.45px;font-size:14px;line-height:14px;font-weight:normal;color:#666;letter-spacing:-0.039px;">miniApp Type:</span>
<span class="t" style="left:1121.74px;top:305.35px;font-size:14px;line-height:14px;font-weight:normal;color:#666;letter-spacing:-0.156px;">Group:</span>
<span class="t" style="left:1122.40px;top:333.35px;font-size:14px;line-height:14px;font-weight:normal;color:#666;letter-spacing:-0.654px;">ANI:</span>
<span class="t" style="left:1121.31px;top:361.35px;font-size:14px;line-height:14px;font-weight:normal;color:#666;letter-spacing:-0.101px;">Dialog ID:</span>
<span class="t" style="left:1121.31px;top:391.55px;font-size:14px;line-height:14px;font-weight:normal;color:#666;letter-spacing:-0.194px;">Dialog Group ID:</span>
<span class="t" style="left:979.22px;top:249.65px;font-size:14px;line-height:14px;font-weight:normal;color:#222;letter-spacing:0.000px;transform:scaleX(0.8679);transform-origin:0 0;">Sep 24, 2025 17:03:39</span>
<span class="t" style="left:967.26px;top:277.45px;font-size:14px;line-height:14px;font-weight:normal;color:#222;letter-spacing:0.400px;">SND</span>
<span class="t" style="left:1087.56px;top:277.45px;font-size:14px;line-height:14px;font-weight:normal;color:#222;letter-spacing:-0.867px;">op</span>
<span class="t" style="left:1045.42px;top:333.35px;font-size:14px;line-height:14px;font-weight:normal;color:#222;letter-spacing:-0.082px;">web-chat</span>
<span class="t" style="left:1021.82px;top:363.05px;font-size:14px;line-height:14px;font-weight:normal;color:#222;letter-spacing:0.000px;transform:scaleX(0.8832);transform-origin:0 0;">99f...005a</span>
<span class="t" style="left:1098.06px;top:391.55px;font-size:14px;line-height:14px;font-weight:normal;color:#222;letter-spacing:0.000px;">-</span>
<span class="t" style="left:1383.70px;top:249.65px;font-size:14px;line-height:14px;font-weight:normal;color:#222;letter-spacing:0.000px;transform:scaleX(0.9254);transform-origin:0 0;">0:00.453</span>
<span class="t" style="left:1404.51px;top:277.45px;font-size:14px;line-height:14px;font-weight:normal;color:#222;letter-spacing:-0.212px;">Flow</span>
<span class="t" style="left:1371.53px;top:333.35px;font-size:14px;line-height:14px;font-weight:normal;color:#222;letter-spacing:0.170px;">undefined</span>
<span class="t" style="left:1357.70px;top:363.05px;font-size:14px;line-height:14px;font-weight:normal;color:#222;letter-spacing:0.000px;transform:scaleX(0.9178);transform-origin:0 0;">54f...38cf</span>
<span class="t" style="left:1357.70px;top:392.75px;font-size:14px;line-height:14px;font-weight:normal;color:#222;letter-spacing:0.000px;transform:scaleX(0.9178);transform-origin:0 0;">54f...38cf</span>
<span class="t" style="left:806.08px;top:443.65px;font-size:14px;line-height:14px;font-weight:bold;color:#fff;letter-spacing:-0.279px;-webkit-text-stroke:0.35px #fff;">Show events</span>
<span class="t" style="left:956.83px;top:443.65px;font-size:14px;line-height:14px;font-weight:bold;color:#1565f5;letter-spacing:-0.277px;-webkit-text-stroke:0.35px #1565f5;">Log File</span>
<span class="t" style="left:1122.13px;top:453.20px;font-size:15px;line-height:15px;font-weight:normal;color:#1e1e1e;letter-spacing:0.393px;z-index:7;">Download JSON</span>
<span class="t" style="left:1122.13px;top:485.10px;font-size:15px;line-height:15px;font-weight:normal;color:#1e1e1e;letter-spacing:0.282px;z-index:7;">Download RTF</span>
<span class="t" style="left:1122.13px;top:517.10px;font-size:15px;line-height:15px;font-weight:normal;color:#1e1e1e;letter-spacing:0.440px;z-index:7;">Download Log File</span>
<span class="t" style="left:1122.10px;top:549.00px;font-size:15px;line-height:15px;font-weight:normal;color:#1e1e1e;letter-spacing:-0.038px;z-index:7;">Create Test Case</span>
<span class="t" style="left:787.45px;top:502.42px;font-size:12.5px;line-height:12.5px;font-weight:normal;color:#333;letter-spacing:0.000px;">1</span>
<span class="t" style="left:786.40px;top:586.62px;font-size:12.5px;line-height:12.5px;font-weight:normal;color:#333;letter-spacing:0.000px;">2</span>
<span class="t" style="left:787.05px;top:658.72px;font-size:12.5px;line-height:12.5px;font-weight:normal;color:#333;letter-spacing:0.000px;">3</span>
<span class="t" style="left:866.30px;top:509.38px;font-size:15.5px;line-height:15.5px;font-weight:normal;color:#1c1c1c;letter-spacing:0.300px;">Welcome to our new voice-enabled</span>
<span class="t" style="left:1293.03px;top:509.38px;font-size:15.5px;line-height:15.5px;font-weight:normal;color:#1c1c1c;letter-spacing:0.310px;">rtual</span>
<span class="t" style="left:866.30px;top:530.28px;font-size:15.5px;line-height:15.5px;font-weight:normal;color:#1c1c1c;letter-spacing:-0.010px;">Assistant.</span>
<span class="t" style="left:865.09px;top:595.18px;font-size:15.5px;line-height:15.5px;font-weight:normal;color:#1c1c1c;letter-spacing:0.129px;">How can i help you?</span>
<span class="t" style="left:1185.33px;top:661.58px;font-size:15.5px;line-height:15.5px;font-weight:normal;color:#1c1c1c;letter-spacing:0.247px;">i want to activate my card</span>
<span class="t" style="left:1397.10px;top:681.84px;font-size:12px;line-height:12px;font-weight:normal;color:#555;letter-spacing:-0.901px;">17:03</span>
<span class="t" style="left:866.06px;top:709.38px;font-size:15.5px;line-height:15.5px;font-weight:normal;color:#1c1c1c;letter-spacing:0.060px;">Your card has been activated</span>
</body></html>
